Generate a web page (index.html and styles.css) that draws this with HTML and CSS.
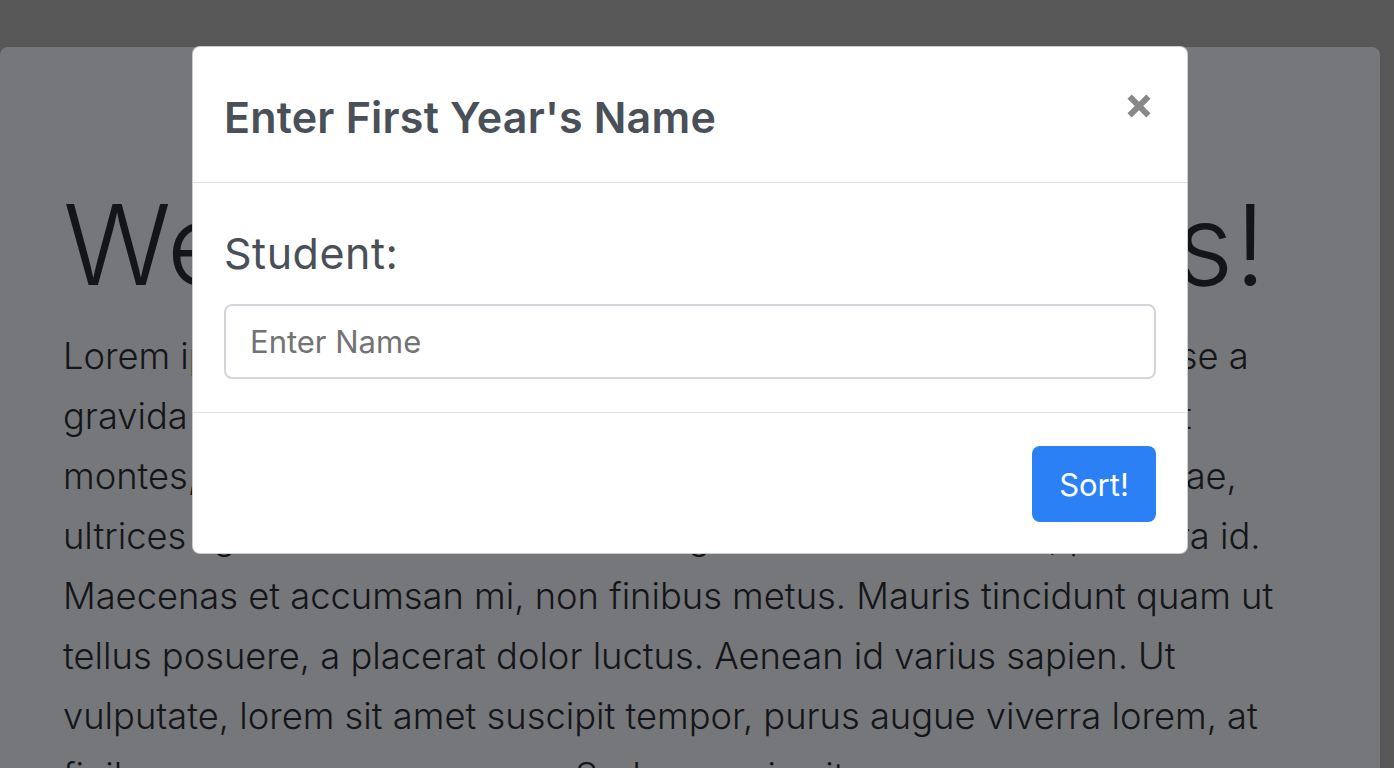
FILE: index.html
```html
<!DOCTYPE html>
<html lang="en">
<head>
<meta charset="utf-8">
<title>Sorting Hat</title>
<link rel="stylesheet" href="styles.css">
</head>
<body>
<div class="page">
  <main class="jumbo">
    <h1 class="display">Welcome to Hogwarts!</h1>
    <p class="lead">Lorem ipsum dolor sit amet, consectetur adipiscing elit. Suspendisse a<br>
gravida nisl. Cum sociis natoque penatibus et magnis dis parturient<br>
montes, nascetur ridiculus mus. Vivamus vel lorem eu nisi quod vitae,<br>
ultrices ligula. Nullam lobortis tellus eget nunc sed velit dui, pharetra id.<br>
Maecenas et accumsan mi, non finibus metus. Mauris tincidunt quam ut<br>
tellus posuere, a placerat dolor luctus. Aenean id varius sapien. Ut<br>
vulputate, lorem sit amet suscipit tempor, purus augue viverra lorem, at<br>
finibus urna nunc nec magna. Sed a mauris vitae.</p>
  </main>
</div>

<div class="modal" role="dialog" aria-labelledby="modal-title">
  <div class="modal-header">
    <h5 class="modal-title" id="modal-title">Enter First Year's Name</h5>
    <button class="close" type="button" aria-label="Close">
      <svg width="24" height="24" viewBox="0 0 24 24" aria-hidden="true">
        <path d="M2.6 2.6 L21.4 21.4 M21.4 2.6 L2.6 21.4" stroke="#888888" stroke-width="6" fill="none"/>
      </svg>
    </button>
  </div>
  <div class="modal-body">
    <label class="field-label" for="student">Student:</label>
    <input class="field-input" id="student" type="text" placeholder="Enter Name">
  </div>
  <div class="modal-footer">
    <button class="btn-primary" type="button">Sort!</button>
  </div>
</div>
</body>
</html>
```
FILE: styles.css
```css
html, body {
  margin: 0;
  padding: 0;
  height: 100%;
  overflow: hidden;
}

body {
  background: #575757;
  font-family: "Inter", "Liberation Sans", sans-serif;
}

.page {
  padding-top: 47px;
  padding-right: 14px;
  height: 100%;
  box-sizing: border-box;
}

.jumbo {
  background: #76777a;
  border-radius: 8px 8px 0 0;
  height: 100%;
  box-sizing: border-box;
  padding: 130px 63px 0 63px;
  color: #141518;
}

.display {
  margin: 0;
  font-size: 112px;
  font-weight: 300;
  line-height: 134px;
  letter-spacing: 1.2px;
  white-space: nowrap;
}

.lead {
  margin: 15px 0 0 0;
  font-size: 36.3px;
  font-weight: 300;
  line-height: 60px;
  white-space: nowrap;
}

.modal {
  position: absolute;
  left: 192px;
  top: 46px;
  width: 996px;
  box-sizing: border-box;
  background: #ffffff;
  border: 1px solid rgba(0, 0, 0, 0.2);
  border-radius: 8px;
  color: #495057;
}

.modal-header {
  display: flex;
  align-items: flex-start;
  justify-content: space-between;
  padding: 40px 32px 35px 31px;
  border-bottom: 1px solid #dee2e6;
}

.modal-title {
  margin: 0;
  font-size: 43px;
  font-weight: 600;
  line-height: 60px;
  letter-spacing: 0.2px;
}

.close {
  background: none;
  border: 0;
  padding: 0;
  margin: 7px 4px 0 0;
  width: 24px;
  height: 24px;
  cursor: pointer;
  display: block;
}

.close svg {
  display: block;
}

.modal-body {
  padding: 40px 31px 33px 31px;
  border-bottom: 1px solid #dee2e6;
}

.field-label {
  display: block;
  font-size: 43px;
  font-weight: 400;
  line-height: 60px;
  letter-spacing: 0.5px;
  margin-bottom: 21px;
}

.field-input {
  display: block;
  width: 100%;
  height: 75px;
  box-sizing: border-box;
  border: 2px solid #d3d6da;
  border-radius: 8px;
  padding: 0 24px;
  font-family: "Inter", "Liberation Sans", sans-serif;
  font-size: 31px;
  color: #495057;
  background: #ffffff;
  outline: none;
}

.field-input::placeholder {
  color: #737373;
}

.modal-footer {
  display: flex;
  justify-content: flex-end;
  padding: 33px 31px 31px 31px;
}

.btn-primary {
  width: 124px;
  height: 76px;
  border: 0;
  border-radius: 8px;
  background: #2c80f6;
  color: #ffffff;
  font-family: "Inter", "Liberation Sans", sans-serif;
  font-size: 31px;
  font-weight: 400;
  cursor: pointer;
}
```
